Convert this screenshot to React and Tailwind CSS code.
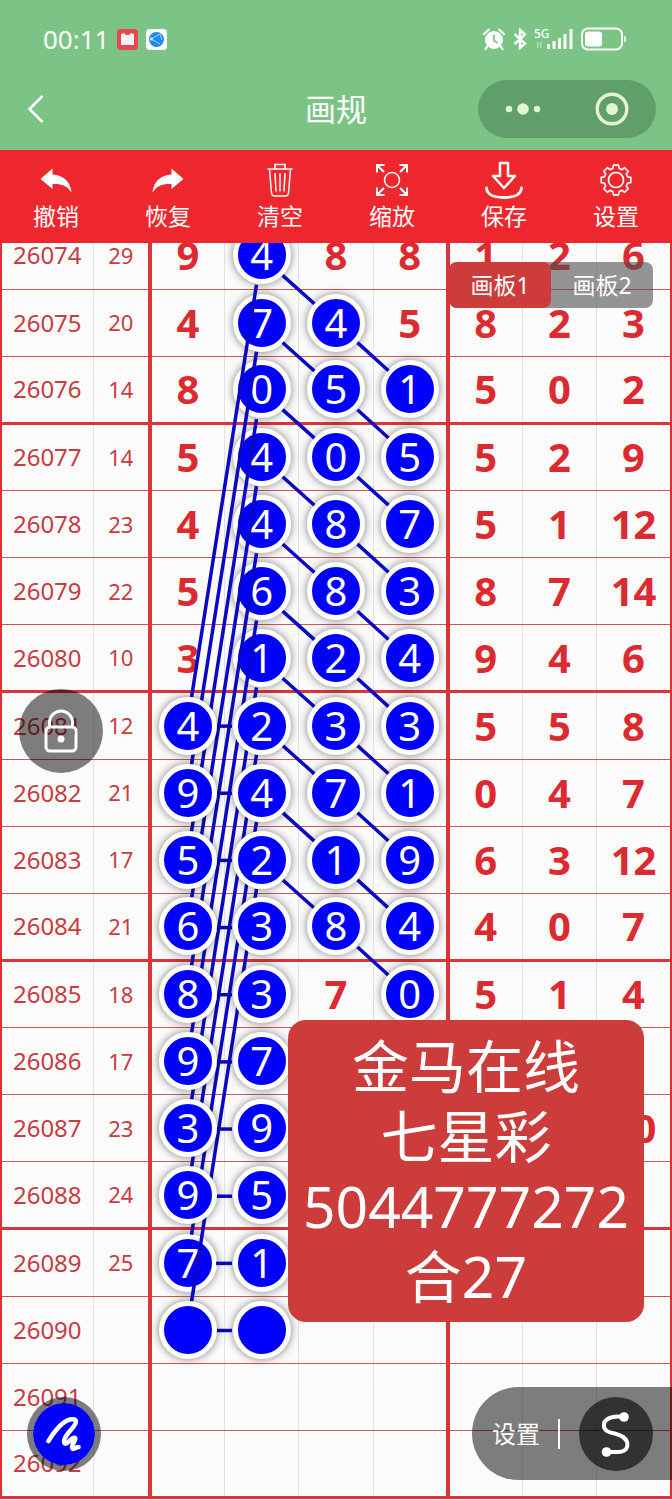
import { useState } from "react";

// Each row: issue number, sum, then the seven drawn columns
const rows = [
  { issue: "26074", sum: 29, nums: [9, 4, 8, 8, 1, 2, 6] },
  { issue: "26075", sum: 20, nums: [4, 7, 4, 5, 8, 2, 3] },
  { issue: "26076", sum: 14, nums: [8, 0, 5, 1, 5, 0, 2] },
  { issue: "26077", sum: 14, nums: [5, 4, 0, 5, 5, 2, 9] },
  { issue: "26078", sum: 23, nums: [4, 4, 8, 7, 5, 1, 12] },
  { issue: "26079", sum: 22, nums: [5, 6, 8, 3, 8, 7, 14] },
  { issue: "26080", sum: 10, nums: [3, 1, 2, 4, 9, 4, 6] },
  { issue: "26081", sum: 12, nums: [4, 2, 3, 3, 5, 5, 8] },
  { issue: "26082", sum: 21, nums: [9, 4, 7, 1, 0, 4, 7] },
  { issue: "26083", sum: 17, nums: [5, 2, 1, 9, 6, 3, 12] },
  { issue: "26084", sum: 21, nums: [6, 3, 8, 4, 4, 0, 7] },
  { issue: "26085", sum: 18, nums: [8, 3, 7, 0, 5, 1, 4] },
  { issue: "26086", sum: 17, nums: [9, 7, "", "", "", "", ""] },
  { issue: "26087", sum: 23, nums: [3, 9, "", "", "", "", 10] },
  { issue: "26088", sum: 24, nums: [9, 5, "", "", "", "", ""] },
  { issue: "26089", sum: 25, nums: [7, 1, "", "", "", "", ""] },
  { issue: "26090", sum: "", nums: ["", "", "", "", "", "", ""] },
  { issue: "26091", sum: "", nums: ["", "", "", "", "", "", ""] },
  { issue: "26092", sum: "", nums: ["", "", "", "", "", "", ""] },
];

// Marked row range (inclusive) for the first four columns
const marked = [
  [7, 16],
  [0, 16],
  [1, 10],
  [2, 11],
];

const isMarked = (row, col) =>
  col < marked.length && row >= marked[col][0] && row <= marked[col][1];

const BOARD_W = 672;
const BOARD_H = 1277;
const colX = [187, 261, 336, 410];
const rowY = (row) => 34 + (row * (BOARD_H - 1)) / rows.length;

// Line between two marks, trimmed so it starts and ends at their rims
const link = (colA, rowA, colB, rowB) => {
  const x1 = colX[colA];
  const y1 = rowY(rowA);
  const x2 = colX[colB];
  const y2 = rowY(rowB);
  const len = Math.hypot(x2 - x1, y2 - y1);
  const dx = ((x2 - x1) / len) * 29;
  const dy = ((y2 - y1) / len) * 29;
  return { x1: x1 + dx, y1: y1 + dy, x2: x2 - dx, y2: y2 - dy };
};

const links = [];
for (let i = 0; i < 10; i++) {
  links.push(link(1, i, 0, i + 7));
  links.push(link(0, i + 7, 1, i + 7));
  links.push(link(1, i, 2, i + 1));
  links.push(link(2, i + 1, 3, i + 2));
}

// Rows above the base block sit below the lines, the rest cover them
const markLayer = (row, col) =>
  row < 7 || (row === 15 && col === 0) ? "z-0" : "z-20";

const gearPath = () => {
  const pts = [];
  for (let i = 0; i < 8; i++) {
    const a = (i * Math.PI) / 4;
    [
      [-0.26, 12],
      [-0.17, 15],
      [0.17, 15],
      [0.26, 12],
    ].forEach(([off, r]) => {
      pts.push(
        `${(17 + r * Math.sin(a + off)).toFixed(2)} ${(17 - r * Math.cos(a + off)).toFixed(2)}`
      );
    });
  }
  return `M${pts.join("L")}Z`;
};

const SwooshIcon = ({ className = "" }) => (
  <svg viewBox="0 0 32 26" className={`w-8 h-[26px] ${className}`} fill="currentColor">
    <path d="M0.500 12 12.500 1.500V7.500C23 8 30.500 14 31.500 25.500 27 18.500 21 16.500 12.500 17V22Z" />
  </svg>
);

const TrashIcon = () => (
  <svg viewBox="0 0 26 34" className="w-[26px] h-[34px]" fill="none" stroke="currentColor" strokeWidth="1.500">
    <path d="M0.500 6H25.500M8 6V1.500H18V6M2.500 6 4.500 30Q4.700 33 7.500 33H18.500Q21.300 33 21.500 30L23.500 6M8 10 9 28.500M13 10V28.500M18 10 17 28.500" />
  </svg>
);

const ZoomIcon = () => (
  <svg viewBox="0 0 32 32" className="size-8" fill="none" stroke="currentColor" strokeWidth="2">
    <circle cx="16" cy="16" r="7.500" strokeWidth="1.500" />
    <path d="M1 8.500V1H8.500M1 1 8 8M23.500 1H31V8.500M31 1 24 8M1 23.500V31H8.500M1 31 8 24M31 23.500V31H23.500M31 31 24 24" />
  </svg>
);

const SaveIcon = () => (
  <svg viewBox="0 0 38 38" className="size-[38px]" fill="none" stroke="currentColor" strokeWidth="2.500" strokeLinejoin="round">
    <path d="M15 2H23V15H30L19 27 8 15H15Z" />
    <path d="M1.500 27C2 33 8 36.500 19 36.500S36 33 36.500 27" strokeWidth="2.800" strokeLinecap="round" />
  </svg>
);

const GearIcon = () => (
  <svg viewBox="0 0 34 34" className="size-[34px]" fill="none" stroke="currentColor" strokeWidth="1.700" strokeLinejoin="round">
    <path d={gearPath()} />
    <circle cx="17" cy="17" r="7.500" />
  </svg>
);

const tools = [
  { label: "撤销", icon: <SwooshIcon /> },
  { label: "恢复", icon: <SwooshIcon className="-scale-x-100" /> },
  { label: "清空", icon: <TrashIcon /> },
  { label: "缩放", icon: <ZoomIcon /> },
  { label: "保存", icon: <SaveIcon /> },
  { label: "设置", icon: <GearIcon /> },
];

function StatusBar() {
  return (
    <div className="flex h-[78px] items-center justify-between pl-[43px] pr-[45px]">
      <div className="flex items-center gap-2">
        <span className="text-[26px] leading-8">00:11</span>
        <svg viewBox="0 0 21 21" className="size-[21px]">
          <rect width="21" height="21" rx="4" fill="#ea4650" />
          <path d="M4 5 7 4 9 6H12L14 4 17 5V16H4Z" fill="#fff4f2" />
        </svg>
        <svg viewBox="0 0 21 21" className="size-[21px]">
          <rect width="21" height="21" rx="4" fill="#fff" />
          <circle cx="10.500" cy="10.500" r="7.500" fill="#2089e6" />
          <path d="M5 10 14 5M5 10 14 15M14 5 16 11" stroke="#9fd4fb" strokeWidth="1" fill="none" />
          <circle cx="5.500" cy="10" r="1.500" fill="#d8efff" />
        </svg>
      </div>
      <div className="flex items-center gap-[7px]">
        <svg viewBox="0 0 24 24" className="size-6" fill="currentColor">
          <circle cx="12" cy="13" r="9" />
          <path d="M2 7 7 2.500M22 7 17 2.500M5.500 19 3.500 22M18.500 19 20.500 22" stroke="currentColor" strokeWidth="2.200" strokeLinecap="round" />
          <path d="M12 8V13.500L15.500 16" stroke="#7cc386" strokeWidth="1.800" fill="none" />
        </svg>
        <svg viewBox="0 0 14 22" className="h-[22px] w-[14px]" fill="none" stroke="currentColor" strokeWidth="2.400">
          <path d="M1.500 6 12 15.500 7 20V2L12 6.500 1.500 16" />
        </svg>
        <svg viewBox="0 0 40 24" className="h-6 w-10 overflow-visible" fill="currentColor">
          <text x="0" y="11" fontSize="12" fontWeight="500">5G</text>
          <path d="M3 15H4.500V21H3ZM6 15H7.500V21H6Z" opacity="0.400" />
          <path d="M13 17H16V22H13ZM18.500 14H21.500V22H18.500ZM24 11H27V22H24ZM29.500 7H32.500V22H29.500ZM35.500 2H38.500V22H35.500Z" />
        </svg>
        <svg viewBox="0 0 46 24" className="h-6 w-[46px]" fill="none">
          <rect x="1" y="1.500" width="40" height="21" rx="6" stroke="currentColor" strokeWidth="2" />
          <rect x="4" y="4.500" width="17" height="15" rx="3" fill="currentColor" />
          <path d="M43.500 9Q46 12 43.500 15Z" fill="currentColor" stroke="currentColor" />
        </svg>
      </div>
    </div>
  );
}

function NavBar() {
  return (
    <div className="grid h-[62px] grid-cols-3 items-center px-4">
      <button aria-label="返回" className="justify-self-start pl-2">
        <svg viewBox="0 0 22 30" className="h-[30px] w-[22px]" fill="none" stroke="currentColor" strokeWidth="2.600">
          <path d="M18.500 2 5.500 15 18.500 28" />
        </svg>
      </button>
      <h1 className="text-center text-[31px] leading-10">画规</h1>
      <div className="flex h-[58px] w-[178px] items-center justify-around justify-self-end rounded-full bg-[#609f6a] text-[#e2f3d6]">
        <button aria-label="更多">
          <svg viewBox="0 0 36 12" className="h-3 w-9" fill="currentColor">
            <circle cx="4" cy="6" r="3.200" />
            <circle cx="18" cy="6" r="5.800" />
            <circle cx="32" cy="6" r="3.200" />
          </svg>
        </button>
        <button aria-label="关闭">
          <svg viewBox="0 0 34 34" className="size-[34px]" fill="none">
            <circle cx="17" cy="17" r="14.800" stroke="currentColor" strokeWidth="3.400" />
            <circle cx="17" cy="17" r="6" fill="currentColor" />
          </svg>
        </button>
      </div>
    </div>
  );
}

function Board() {
  return (
    <div className="relative -mt-[21px]">
      <table className="h-[1277px] w-full table-fixed border-collapse border-x-2 border-[#e03034] text-center">
        <colgroup>
          <col className="w-[92px]" />
          <col className="w-[57px]" />
          <col span={7} />
        </colgroup>
        <tbody>
          {rows.map((row, r) => {
            // a heavy rule closes every fourth row
            const rule =
              r % 4 === 2 || r === rows.length - 1
                ? "border-b-3 border-b-[#dc3438]"
                : "border-b border-b-[#cf5559]";
            return (
              <tr key={row.issue} className="h-[67px]">
                <td className={`border-r border-r-[#e2e2e2] p-0 text-2xl text-[#c83c42] ${rule}`}>
                  {row.issue}
                </td>
                <td className={`border-r-4 border-r-[#d8363a] p-0 text-[22px] text-[#c83c42] ${rule}`}>
                  {row.sum}
                </td>
                {row.nums.map((num, c) => (
                  <td
                    key={c}
                    className={`p-0 text-[40px] leading-none ${rule} ${
                      c === 3
                        ? "border-r-4 border-r-[#d8363a]"
                        : c === 6
                          ? ""
                          : "border-r border-r-[#e2e2e2]"
                    }`}
                  >
                    {isMarked(r, c) ? (
                      <span
                        className={`relative inline-grid size-[58px] place-items-center rounded-full border-5 border-white bg-[#0000ff] align-middle text-white shadow-[0_0_9px_rgba(0,0,0,0.5)] ${markLayer(r, c)}`}
                      >
                        {num}
                      </span>
                    ) : (
                      <span className="font-bold text-[#dc2b30]">{num}</span>
                    )}
                  </td>
                ))}
              </tr>
            );
          })}
        </tbody>
      </table>

      <svg
        viewBox={`0 0 ${BOARD_W} ${BOARD_H}`}
        preserveAspectRatio="none"
        className="pointer-events-none absolute inset-0 z-10 h-full w-full"
        stroke="#0a08c4"
        strokeWidth="3.500"
      >
        {links.map((l, i) => (
          <line key={i} {...l} />
        ))}
      </svg>
    </div>
  );
}

export default function App() {
  const [panel, setPanel] = useState(1);

  return (
    <div className="overflow-hidden bg-[#fbfbfb] font-['Noto_Sans','Noto_Sans_CJK_SC',sans-serif]">
      <header className="bg-[#7cc386] pb-[10px] text-white">
        <StatusBar />
        <NavBar />
      </header>

      <nav className="grid h-[93px] grid-cols-6 bg-[#ed272d] text-white">
        {tools.map((tool) => (
          <button key={tool.label} className="flex flex-col items-center pt-[11px]">
            <span className="flex h-[38px] items-center">{tool.icon}</span>
            <span className="text-[23px] leading-[34px]">{tool.label}</span>
          </button>
        ))}
      </nav>

      <main className="relative overflow-hidden pb-px">
        <Board />

        {/* Panel switch */}
        <div className="absolute right-[19px] top-[19px] z-30 flex rounded-lg bg-[#505050]/60 text-[23px] leading-[46px] text-white">
          {[1, 2].map((n) => (
            <button
              key={n}
              onClick={() => setPanel(n)}
              className={`w-[102px] rounded-lg ${panel === n ? "bg-[#cc3c3a]" : ""}`}
            >
              画板{n}
            </button>
          ))}
        </div>

        {/* Lock */}
        <button
          aria-label="锁定"
          className="absolute left-[19px] top-[446px] z-30 grid size-[84px] place-items-center rounded-full bg-black/50 text-white"
        >
          <svg viewBox="0 0 34 44" className="h-11 w-[34px]" fill="none" stroke="currentColor" strokeWidth="3">
            <rect x="2" y="18" width="30" height="24" rx="4" />
            <path d="M5.500 18V13.500A11.500 11.500 0 0 1 28.500 13.500V18" />
            <circle cx="17" cy="30" r="3.500" fill="currentColor" stroke="none" />
          </svg>
        </button>

        {/* Note */}
        <div className="absolute right-7 top-[777px] z-30 rounded-[18px] bg-[#cc3c3a] px-[15px] py-[11px] text-center text-[57px] leading-[70px] text-white">
          <p>金马在线</p>
          <p>七星彩</p>
          <p>5044777272</p>
          <p>合27</p>
        </div>

        {/* Pen */}
        <button
          aria-label="画笔"
          className="absolute bottom-[29px] left-[27px] z-30 grid size-[74px] place-items-center rounded-full border-6 border-black/50 bg-[#0000ff] bg-clip-padding text-white"
        >
          <svg viewBox="0 0 36 36" className="size-9" fill="none" stroke="currentColor" strokeWidth="4.600" strokeLinecap="round" strokeLinejoin="round">
            <path d="M2.500 25C8 15 17 5 24 3.500 32 2 31 7 26 12.500 21 18 16 25 19 27.500 22 29 25 20.500 29 22 31 24 24 29 26.500 32.500 28 34 30 31 32.500 31" />
          </svg>
        </button>

        {/* Line settings */}
        <div className="absolute bottom-5 right-0 z-30 flex h-[93px] items-center rounded-l-full bg-black/50 pl-5 pr-[19px] text-white">
          <button className="text-2xl">设置</button>
          <span className="ml-[18px] mr-[19px] h-[30px] w-0.5 bg-white" />
          <button aria-label="连线" className="grid size-[74px] place-items-center rounded-full bg-black/60">
            <svg viewBox="0 0 30 46" className="h-[46px] w-[30px]" fill="none" stroke="currentColor" strokeWidth="4">
              <path d="M23 6C11 4 2 8 3 15.500 4 23 15 21 22 26 29 31 28 41 17 41H5.500" />
              <circle cx="23" cy="6" r="4.800" fill="currentColor" stroke="none" />
              <circle cx="5.500" cy="41" r="4.800" fill="currentColor" stroke="none" />
            </svg>
          </button>
        </div>
      </main>
    </div>
  );
}
